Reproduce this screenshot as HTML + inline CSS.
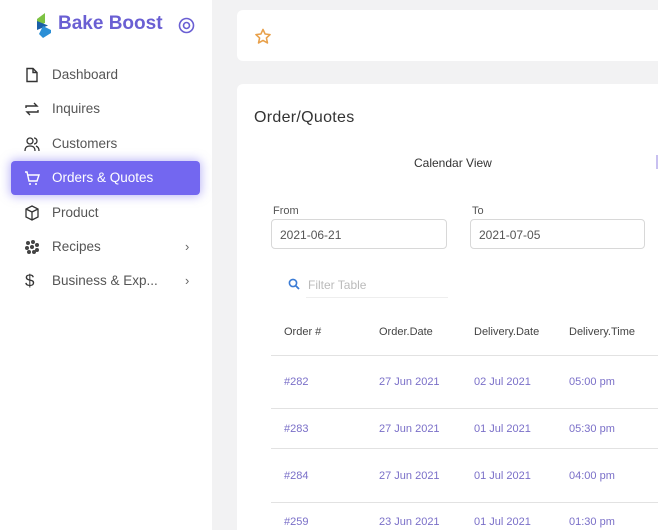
<!DOCTYPE html>
<html style="overflow:hidden;height:530px"><head><style>
*{margin:0;padding:0;box-sizing:border-box}
body{width:658px;height:530px;overflow:hidden;background:#f2f2f3;font-family:"Liberation Sans",sans-serif;position:relative;color:#444}
.a{position:absolute;white-space:nowrap}
.side{position:absolute;left:0;top:0;width:212px;height:530px;background:#fff}
.nav{font-size:13.5px;color:#555}
.ic{position:absolute;left:24px;width:16px;height:16px}
.card{position:absolute;background:#fff;border-radius:6px}
.inp{position:absolute;border:1px solid #d8d8d8;border-radius:4px;height:30px;font-size:12px;color:#555;padding:8px 0 0 8px}
.th{font-size:11px;color:#444}
.td{font-size:11px;color:#7a6fc8}
.ln{position:absolute;left:271px;width:387px;height:1px;background:#e2e2e2}
</style></head><body>
<div class="side"></div>
<svg class="a" style="left:37px;top:13px" width="15" height="25" viewBox="0 0 15 25"><path d="M0 6 L8 0 L8 10 L0 13Z" fill="#7cc242"/><path d="M0 8 L11 12.5 L0 17Z" fill="#1a5fa8"/><path d="M6 13 L14 17 L14 20 L6 25 L2 21Z" fill="#2b8fd6"/></svg>
<div class="a" style="left:58px;top:13px;font-size:19px;font-weight:bold;color:#6a5fd3">Bake Boost</div>
<svg class="a" style="left:178px;top:17px" width="17" height="17"><circle cx="8.5" cy="8.5" r="7" fill="none" stroke="#6a5fd3" stroke-width="1.6"/><circle cx="8.5" cy="8.5" r="3" fill="none" stroke="#6a5fd3" stroke-width="1.6"/></svg>

<svg class="ic" style="top:67px" viewBox="0 0 16 16"><path d="M3 1.5h6l4 4v9H3z M9 1.5v4h4" fill="none" stroke="#333" stroke-width="1.4"/></svg>
<div class="a nav" style="left:52px;top:67px">Dashboard</div>
<svg class="ic" style="top:101px" viewBox="0 0 16 16"><path d="M2 7V5h11l-3-3M14 9v2H3l3 3" fill="none" stroke="#333" stroke-width="1.4"/></svg>
<div class="a nav" style="left:52px;top:101px">Inquires</div>
<svg class="ic" style="top:136px" viewBox="0 0 16 16"><circle cx="6" cy="5" r="3" fill="none" stroke="#333" stroke-width="1.3"/><path d="M1 15c0-4 2-5 5-5s5 1 5 5M10 2a3 3 0 0 1 0 6M12 10c2 1 3 2 3 5" fill="none" stroke="#333" stroke-width="1.3"/></svg>
<div class="a nav" style="left:52px;top:136px">Customers</div>
<div class="a" style="left:11px;top:161px;width:189px;height:34px;background:#7367f0;border-radius:4px;box-shadow:0 0 10px 1px rgba(115,103,240,.5)"></div>
<svg class="ic" style="top:170px" viewBox="0 0 16 16"><path d="M1 2h2l2 9h8l2-6H4" fill="none" stroke="#fff" stroke-width="1.4"/><circle cx="6" cy="14" r="1" fill="#fff"/><circle cx="12" cy="14" r="1" fill="#fff"/></svg>
<div class="a nav" style="left:52px;top:170px;color:#fff">Orders &amp; Quotes</div>
<svg class="ic" style="top:205px" viewBox="0 0 16 16"><path d="M8 1l6 3v8l-6 3-6-3V4z M2 4l6 3 6-3 M8 7v8" fill="none" stroke="#333" stroke-width="1.3"/></svg>
<div class="a nav" style="left:52px;top:205px">Product</div>
<svg class="ic" style="top:239px" viewBox="0 0 16 16"><g fill="#444"><circle cx="4" cy="4" r="2"/><circle cx="9" cy="3" r="2"/><circle cx="13" cy="6" r="2"/><circle cx="3" cy="9" r="2"/><circle cx="8" cy="8" r="2"/><circle cx="13" cy="11" r="2"/><circle cx="5" cy="13" r="2"/><circle cx="10" cy="13" r="2"/></g></svg>
<div class="a nav" style="left:52px;top:239px">Recipes</div>
<div class="a" style="left:185px;top:239px;font-size:13px;color:#666">›</div>
<div class="a" style="left:25px;top:271px;font-size:17px;color:#333">$</div>
<div class="a nav" style="left:52px;top:273px">Business &amp; Exp...</div>
<div class="a" style="left:185px;top:273px;font-size:13px;color:#666">›</div>

<div class="card" style="left:237px;top:10px;width:421px;height:51px;border-radius:6px 0 0 6px"></div>
<svg class="a" style="left:254px;top:28px" width="18" height="17" viewBox="0 0 24 24"><path d="M12 2l3 6.5 7 .8-5.2 4.8 1.5 7-6.3-3.6-6.3 3.6 1.5-7L2 9.3l7-.8z" fill="none" stroke="#e8a04a" stroke-width="2.2" stroke-linejoin="round"/></svg>

<div class="card" style="left:237px;top:84px;width:421px;height:446px;border-radius:6px 0 0 0"></div>
<div class="a" style="left:254px;top:109px;font-size:16px;color:#333;letter-spacing:.3px">Order/Quotes</div>
<div class="a" style="left:414px;top:156px;font-size:12px;color:#333">Calendar View</div>
<div class="a" style="left:656px;top:155px;width:2px;height:14px;background:#c8c0f0"></div>
<div class="a" style="left:273px;top:205px;font-size:11px;color:#555">From</div>
<div class="a" style="left:472px;top:205px;font-size:11px;color:#555">To</div>
<div class="inp" style="left:271px;top:219px;width:176px">2021-06-21</div>
<div class="inp" style="left:470px;top:219px;width:175px">2021-07-05</div>
<svg class="a" style="left:288px;top:278px" width="12" height="12"><circle cx="5" cy="5" r="3.6" fill="none" stroke="#3a7bd5" stroke-width="1.6"/><path d="M7.5 7.5L11 11" stroke="#3a7bd5" stroke-width="1.8"/></svg>
<div class="a" style="left:308px;top:278px;font-size:12px;color:#bbb">Filter Table</div>
<div class="a" style="left:306px;top:297px;width:142px;height:1px;background:#eee"></div>

<div class="a th" style="left:284px;top:326px">Order #</div>
<div class="a th" style="left:379px;top:326px">Order.Date</div>
<div class="a th" style="left:474px;top:326px">Delivery.Date</div>
<div class="a th" style="left:569px;top:326px">Delivery.Time</div>
<div class="ln" style="top:355px"></div>
<div class="a td" style="left:284px;top:376px">#282</div><div class="a td" style="left:379px;top:376px">27 Jun 2021</div><div class="a td" style="left:474px;top:376px">02 Jul 2021</div><div class="a td" style="left:569px;top:376px">05:00 pm</div>
<div class="ln" style="top:408px"></div>
<div class="a td" style="left:284px;top:423px">#283</div><div class="a td" style="left:379px;top:423px">27 Jun 2021</div><div class="a td" style="left:474px;top:423px">01 Jul 2021</div><div class="a td" style="left:569px;top:423px">05:30 pm</div>
<div class="ln" style="top:448px"></div>
<div class="a td" style="left:284px;top:470px">#284</div><div class="a td" style="left:379px;top:470px">27 Jun 2021</div><div class="a td" style="left:474px;top:470px">01 Jul 2021</div><div class="a td" style="left:569px;top:470px">04:00 pm</div>
<div class="ln" style="top:502px"></div>
<div class="a td" style="left:284px;top:516px">#259</div><div class="a td" style="left:379px;top:516px">23 Jun 2021</div><div class="a td" style="left:474px;top:516px">01 Jul 2021</div><div class="a td" style="left:569px;top:516px">01:30 pm</div>
</body></html>
